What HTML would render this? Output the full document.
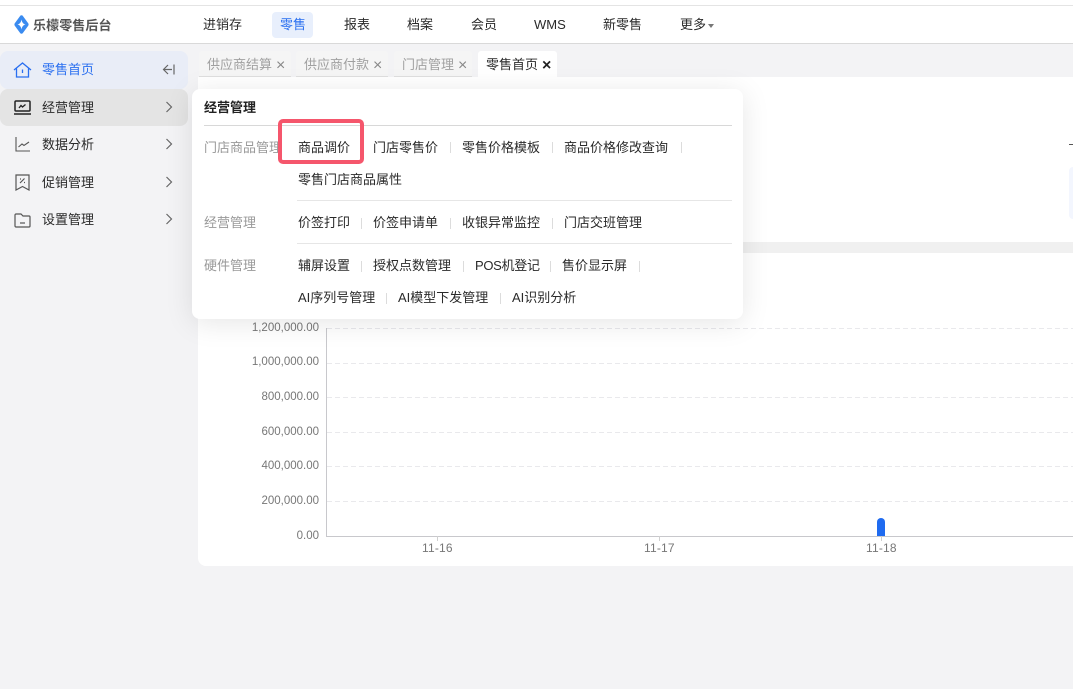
<!DOCTYPE html>
<html lang="zh"><head><meta charset="utf-8">
<style>
*{box-sizing:border-box}
html,body{margin:0;padding:0}
body{width:1073px;height:689px;position:relative;overflow:hidden;background:#f3f3f5;font-family:"Liberation Sans","Noto Sans CJK SC",sans-serif;font-size:13px;color:#2a2a2a}
.a{position:absolute}
.t{position:absolute;white-space:nowrap;line-height:20px;height:20px;transform:translateY(1px)}
.c{position:absolute;white-space:nowrap;line-height:20px;height:20px;font-size:11.5px;color:#777}
.g{color:#999}
.s{position:absolute;width:1px;height:11px;background:#dcdcdc;transform:translateY(1px)}
.d{position:absolute;left:327px;width:746px;height:1px;background:repeating-linear-gradient(90deg,#e9e9ec 0 5px,transparent 5px 8px)}
.tab{position:absolute;top:51px;height:26px;background:#f5f5f5;border-bottom:1px solid #dedede;border-radius:3px 3px 0 0;color:#a0a0a0;line-height:27px;padding-left:8px;white-space:nowrap}
.tab b{font-weight:400;color:#888;margin-left:4px;font-size:16px;line-height:20px;vertical-align:-1px}
</style></head><body>
<div class="a" style="left:0;top:0;width:1073px;height:43px;background:#fff"></div>
<div class="a" style="left:0;top:5px;width:1073px;height:1px;background:#e4e4e4"></div>
<div class="a" style="left:0;top:43px;width:1073px;height:1px;background:#d9d9d9"></div>

<!-- logo -->
<svg class="a" style="left:14px;top:15px" width="15" height="19" viewBox="0 0 15 19"><path d="M6.300 .800Q7.500 -.200 8.700 .800L14.200 8.300Q15 9.500 14.200 10.700L8.700 18.200Q7.500 19.200 6.300 18.200L.800 10.700Q0 9.500 .800 8.300Z" fill="#3a8bf0"/><path d="M7.500 4.500C8 7.300 9 8.800 11.500 9.500C9 10.200 8 11.700 7.500 14.500C7 11.700 6 10.200 3.500 9.500C6 8.800 7 7.300 7.500 4.500Z" fill="#fff"/></svg>
<div class="t" style="left:33px;top:15px;font-size:13px;font-weight:700;color:#555;letter-spacing:.1px">乐檬零售后台</div>

<!-- top nav -->
<div class="a" style="left:272px;top:12px;width:41px;height:26px;background:#e8effc;border-radius:4px"></div>
<div class="t" style="left:203px;top:14px">进销存</div>
<div class="t" style="left:280px;top:14px;color:#2a6ff0">零售</div>
<div class="t" style="left:344px;top:14px">报表</div>
<div class="t" style="left:407px;top:14px">档案</div>
<div class="t" style="left:471px;top:14px">会员</div>
<div class="t" style="left:534px;top:14px">WMS</div>
<div class="t" style="left:603px;top:14px">新零售</div>
<div class="t" style="left:680px;top:14px">更多</div>
<div class="a" style="left:708px;top:24px;width:0;height:0;border:3px solid transparent;border-top:4px solid #777"></div>

<!-- sidebar -->
<div class="a" style="left:0;top:51px;width:188px;height:38px;background:#e9edf7;border-radius:8px"></div>
<div class="a" style="left:0;top:89px;width:188px;height:37px;background:#e4e4e4;border-radius:8px"></div>
<svg class="a" style="left:13px;top:62px" width="19" height="16" viewBox="0 0 19 16" fill="none" stroke="#2a6ff0" stroke-width="1.300"><path d="M1 8L9.500 1L18 8"/><path d="M3.500 6.500V15H15.500V6.500"/><path d="M9.500 7.500V11"/></svg>
<div class="t" style="left:42px;top:59px;color:#2a6ff0">零售首页</div>
<svg class="a" style="left:162px;top:64px" width="13" height="11" viewBox="0 0 13 11" fill="none" stroke="#666" stroke-width="1.200"><path d="M6 1L1.500 5.500L6 10M1.500 5.500H10M12 .500V10.500"/></svg>

<svg class="a" style="left:14px;top:100px" width="17" height="15" viewBox="0 0 17 15" fill="none" stroke="#222" stroke-width="1.500"><rect x="1" y="1" width="15" height="10" rx="1"/><path d="M0 14H17" stroke-width="1.500"/><path d="M5 8L7 5.500L8.500 7L11.500 4.500" stroke-width="1.300"/></svg>
<div class="t" style="left:42px;top:97px">经营管理</div>
<svg class="a" style="left:15px;top:137px" width="15" height="15" viewBox="0 0 15 15" fill="none" stroke="#555" stroke-width="1.100"><path d="M1 0V14H15"/><path d="M3.500 10L7 7L9 8.500L14 5"/></svg>
<div class="t" style="left:42px;top:134px">数据分析</div>
<svg class="a" style="left:15px;top:174px" width="15" height="17" viewBox="0 0 15 17" fill="none" stroke="#555" stroke-width="1.200"><path d="M1 1H14V16L7.500 12.500L1 16Z"/><path d="M5 9L9.500 4.500M5 5H6M9 8.500H10"/></svg>
<div class="t" style="left:42px;top:172px">促销管理</div>
<svg class="a" style="left:14px;top:213px" width="17" height="15" viewBox="0 0 17 15" fill="none" stroke="#555" stroke-width="1.200"><path d="M1 2C1 1.500 1.500 1 2 1H7L9 3H15C15.500 3 16 3.500 16 4V13C16 13.500 15.500 14 15 14H2C1.500 14 1 13.500 1 13Z"/><path d="M6 10H11"/></svg>
<div class="t" style="left:42px;top:209px">设置管理</div>
<svg class="a" style="left:165px;top:101px" width="8" height="12" viewBox="0 0 8 12" fill="none" stroke="#666" stroke-width="1.200"><path d="M1.500 1L6.500 6L1.500 11"/></svg>
<svg class="a" style="left:165px;top:138px" width="8" height="12" viewBox="0 0 8 12" fill="none" stroke="#666" stroke-width="1.200"><path d="M1.500 1L6.500 6L1.500 11"/></svg>
<svg class="a" style="left:165px;top:176px" width="8" height="12" viewBox="0 0 8 12" fill="none" stroke="#666" stroke-width="1.200"><path d="M1.500 1L6.500 6L1.500 11"/></svg>
<svg class="a" style="left:165px;top:213px" width="8" height="12" viewBox="0 0 8 12" fill="none" stroke="#666" stroke-width="1.200"><path d="M1.500 1L6.500 6L1.500 11"/></svg>

<!-- tabs -->
<div class="tab" style="left:199px;width:92px">供应商结算<b>×</b></div>
<div class="tab" style="left:296px;width:92px">供应商付款<b>×</b></div>
<div class="tab" style="left:394px;width:78px">门店管理<b>×</b></div>
<div class="tab" style="left:478px;width:79px;background:#fff;border:0;color:#2a2a2a">零售首页<b style="color:#222;font-weight:700">×</b></div>

<!-- content -->
<div class="a" style="left:198px;top:77px;width:875px;height:165px;background:#fff"></div>
<div class="a" style="left:198px;top:242px;width:875px;height:11px;background:#f0f0f0"></div>
<div class="a" style="left:198px;top:253px;width:875px;height:313px;background:#fff;border-radius:0 0 0 8px"></div>
<div class="a" style="left:1069px;top:144px;width:4px;height:1px;background:#555"></div>
<div class="a" style="left:1069px;top:167px;width:4px;height:52px;background:#f3f6fe;border-radius:6px 0 0 6px"></div>

<!-- chart -->
<div class="d" style="top:328px"></div>
<div class="d" style="top:363px"></div>
<div class="d" style="top:397px"></div>
<div class="d" style="top:432px"></div>
<div class="d" style="top:466px"></div>
<div class="d" style="top:501px"></div>
<div class="a" style="left:326px;top:328px;width:1px;height:209px;background:#c8c8cc"></div>
<div class="a" style="left:326px;top:536px;width:747px;height:1px;background:#c8c8cc"></div>
<div class="a" style="left:437px;top:536px;width:1px;height:5px;background:#d0d0d0"></div>
<div class="a" style="left:659px;top:536px;width:1px;height:5px;background:#d0d0d0"></div>
<div class="a" style="left:881px;top:536px;width:1px;height:5px;background:#d0d0d0"></div>
<div class="a" style="left:877px;top:518px;width:8px;height:18px;background:#1f6bf0;border-radius:4px 4px 0 0"></div>
<div class="c" style="right:754px;top:318px">1,200,000.00</div>
<div class="c" style="right:754px;top:352px">1,000,000.00</div>
<div class="c" style="right:754px;top:387px">800,000.00</div>
<div class="c" style="right:754px;top:422px">600,000.00</div>
<div class="c" style="right:754px;top:456px">400,000.00</div>
<div class="c" style="right:754px;top:491px">200,000.00</div>
<div class="c" style="right:754px;top:526px">0.00</div>
<div class="c" style="left:422px;top:538px;font-size:12px;letter-spacing:.2px">11-16</div>
<div class="c" style="left:644px;top:538px;font-size:12px;letter-spacing:.2px">11-17</div>
<div class="c" style="left:866px;top:538px;font-size:12px;letter-spacing:.2px">11-18</div>

<!-- popup -->
<div class="a" style="left:192px;top:89px;width:551px;height:230px;background:#fff;border-radius:8px;box-shadow:0 4px 28px rgba(0,0,0,.1)"></div>
<div class="t" style="left:204px;top:97px;font-weight:700;color:#222">经营管理</div>
<div class="a" style="left:204px;top:125px;width:528px;height:1px;background:#d8d8d8"></div>
<div class="a" style="left:297px;top:200px;width:435px;height:1px;background:#e6e6e6"></div>
<div class="a" style="left:297px;top:243px;width:435px;height:1px;background:#e6e6e6"></div>

<div class="t g" style="left:204px;top:137px">门店商品管理</div>
<div class="t g" style="left:204px;top:212px">经营管理</div>
<div class="t g" style="left:204px;top:255px">硬件管理</div>

<div class="t" style="left:298px;top:137px">商品调价</div>
<div class="t" style="left:373px;top:137px">门店零售价</div>
<div class="s" style="left:450px;top:141px"></div>
<div class="t" style="left:462px;top:137px">零售价格模板</div>
<div class="s" style="left:552px;top:141px"></div>
<div class="t" style="left:564px;top:137px">商品价格修改查询</div>
<div class="s" style="left:681px;top:141px"></div>
<div class="t" style="left:298px;top:169px">零售门店商品属性</div>

<div class="t" style="left:298px;top:212px">价签打印</div>
<div class="s" style="left:361px;top:217px"></div>
<div class="t" style="left:373px;top:212px">价签申请单</div>
<div class="s" style="left:450px;top:217px"></div>
<div class="t" style="left:462px;top:212px">收银异常监控</div>
<div class="s" style="left:552px;top:217px"></div>
<div class="t" style="left:564px;top:212px">门店交班管理</div>

<div class="t" style="left:298px;top:255px">辅屏设置</div>
<div class="s" style="left:361px;top:260px"></div>
<div class="t" style="left:373px;top:255px">授权点数管理</div>
<div class="s" style="left:463px;top:260px"></div>
<div class="t" style="left:475px;top:255px;letter-spacing:-.3px">POS机登记</div>
<div class="s" style="left:550px;top:260px"></div>
<div class="t" style="left:562px;top:255px">售价显示屏</div>
<div class="s" style="left:639px;top:260px"></div>

<div class="t" style="left:298px;top:287px">AI序列号管理</div>
<div class="s" style="left:386px;top:292px"></div>
<div class="t" style="left:398px;top:287px">AI模型下发管理</div>
<div class="s" style="left:500px;top:292px"></div>
<div class="t" style="left:512px;top:287px">AI识别分析</div>

<!-- highlight -->
<div class="a" style="left:278px;top:119px;width:86px;height:45px;border:4.5px solid #f5566c;border-radius:5px"></div>
</body></html>
